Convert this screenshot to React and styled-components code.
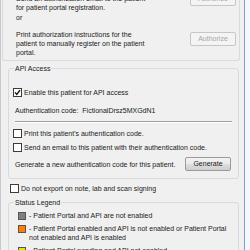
import React from 'react';
import styled, { createGlobalStyle } from 'styled-components';

const GlobalStyle = createGlobalStyle`
  html, body {
    margin: 0;
    padding: 0;
    background: #f0f0f0;
  }
  body {
    font-family: 'Liberation Sans', Arial, sans-serif;
    font-size: 7px;
    line-height: 9px;
    color: #1a1a1a;
  }
`;

const Window = styled.div`
  width: 250px;
  height: 250px;
  overflow: hidden;
  display: flex;
  background: #f0f0f0;
`;

const Main = styled.div`
  width: 244px;
  flex-shrink: 0;
  display: flex;
  flex-direction: column;
  border-left: 1px solid #c8c8c8;
  box-sizing: border-box;
`;

const Edge = styled.div`
  width: 1px;
  background: #7f9dc4;
`;

const EdgeFill = styled.div`
  flex: 1;
  background: #f4f7fb;
`;

const PortalGroup = styled.div`
  margin-top: -10px;
  margin-left: 1px;
  width: 238px;
  box-sizing: border-box;
  border: 1px solid #d5dbe0;
  border-top: none;
  border-radius: 0 0 3px 3px;
  padding: 4px 3px 3px 13px;
  display: flex;
  flex-direction: column;
`;

const ActionRow = styled.div`
  display: flex;
  justify-content: space-between;
  align-items: flex-start;
  margin-top: ${(p) => p.$gap || 0}px;
`;

const Text = styled.div`
  white-space: nowrap;
`;

const WinButton = styled.button`
  width: 46px;
  height: 14px;
  padding: 0;
  margin-top: ${(p) => p.$offset || 0}px;
  flex-shrink: 0;
  box-sizing: border-box;
  font-family: inherit;
  font-size: 7px;
  line-height: 12px;
  border-radius: 2px;
  border: 1px solid ${(p) => (p.disabled ? '#c4c7c9' : '#9a9a9a')};
  background: ${(p) =>
    p.disabled ? '#f4f4f4' : 'linear-gradient(#f2f2f2, #ebebeb 50%, #dddddd 51%, #cfcfcf)'};
  color: ${(p) => (p.disabled ? '#a6a6a6' : '#1a1a1a')};
`;

const Group = styled.fieldset`
  margin: ${(p) => p.$top}px 0 0 7px;
  width: 231px;
  box-sizing: border-box;
  border: 1px solid #d5dbe0;
  border-radius: 3px;
  padding: 0 7px ${(p) => p.$bottom || 0}px 6px;
  min-inline-size: 0;
`;

const Legend = styled.legend`
  margin-left: -1px;
  padding: 0 1px;
  line-height: 9px;
`;

const CheckRow = styled.label`
  display: flex;
  align-items: center;
  gap: 2px;
  height: 9px;
  margin-top: ${(p) => p.$gap || 0}px;
  margin-left: ${(p) => p.$indent || 0}px;
  white-space: nowrap;
`;

const Box = styled.span`
  width: 9px;
  height: 9px;
  box-sizing: border-box;
  border: 1px solid #3c3c3c;
  background: #fff;
  display: flex;
  align-items: center;
  justify-content: center;
  flex-shrink: 0;
  margin-left: -2px;
`;

const Line = styled.div`
  margin-top: ${(p) => p.$gap || 0}px;
  white-space: nowrap;
`;

const Separator = styled.div`
  margin-top: ${(p) => p.$gap || 0}px;
  height: 1px;
  background: #a0a0a0;
  border-bottom: 1px solid #ffffff;
  margin-right: -1px;
`;

const GenerateRow = styled.div`
  display: flex;
  align-items: center;
  justify-content: space-between;
  margin-top: 5px;
  height: 14px;
`;

const LegendItem = styled.div`
  display: flex;
  align-items: flex-start;
  gap: 3px;
  margin-top: ${(p) => p.$gap || 0}px;
  padding-left: 3px;
`;

const Swatch = styled.span`
  width: 8px;
  height: 8px;
  flex-shrink: 0;
  box-sizing: border-box;
  margin-top: 0.5px;
  border: 1px solid #555;
  background: ${(p) => p.$color};
`;

function Check({ checked }) {
  return (
    <Box>
      {checked && (
        <svg width="7" height="7" viewBox="0 0 7 7">
          <path d="M1 3.4 L2.8 5.4 L6 1.2" fill="none" stroke="#111" strokeWidth="1.4" />
        </svg>
      )}
    </Box>
  );
}

export default function App() {
  return (
    <Window>
      <GlobalStyle />
      <Main>
        <PortalGroup>
          <ActionRow>
            <Text>
              Send an authorization email to the patient
              <br />
              for patient portal registration.
            </Text>
            <WinButton disabled $offset={-2}>Authorize</WinButton>
          </ActionRow>
          <ActionRow $gap={1}>
            <Text>or</Text>
          </ActionRow>
          <ActionRow $gap={8}>
            <Text>
              Print authorization instructions for the
              <br />
              patient to manually register on the patient
              <br />
              portal.
            </Text>
            <WinButton disabled $offset={2}>Authorize</WinButton>
          </ActionRow>
        </PortalGroup>

        <Group $top={3} $bottom={7}>
          <Legend>API Access</Legend>
          <CheckRow $gap={15}>
            <Check checked />
            Enable this patient for API access
          </CheckRow>
          <Line $gap={9}>Authentication code:&nbsp; FictionalDrsz5MXGdN1</Line>
          <Separator $gap={6} />
          <CheckRow $gap={6}>
            <Check />
            Print this patient's authentication code.
          </CheckRow>
          <CheckRow $gap={5}>
            <Check />
            Send an email to this patient with their authentication code.
          </CheckRow>
          <GenerateRow>
            <Text>Generate a new authentication code for this patient.</Text>
            <WinButton>Generate</WinButton>
          </GenerateRow>
        </Group>

        <CheckRow $gap={5} $indent={11}>
          <Check />
          Do not export on note, lab and scan signing
        </CheckRow>

        <Group $top={5}>
          <Legend>Status Legend</Legend>
          <LegendItem $gap={4}>
            <Swatch $color="#808080" />
            <Text>- Patient Portal and API are not enabled</Text>
          </LegendItem>
          <LegendItem $gap={4}>
            <Swatch $color="#ff8000" />
            <Text>
              - Patient Portal enabled and API is not enabled or Patient Portal
              <br />
              not enabled and API is enabled
            </Text>
          </LegendItem>
          <LegendItem $gap={4}>
            <Swatch $color="#e6e600" />
            <Text>- Patient Portal pending and API not enabled</Text>
          </LegendItem>
        </Group>
      </Main>
      <Edge />
      <EdgeFill />
    </Window>
  );
}
